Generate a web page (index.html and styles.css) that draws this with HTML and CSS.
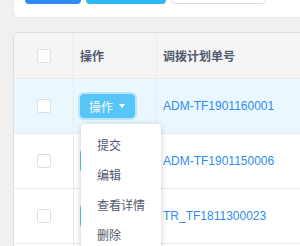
FILE: index.html
```html
<!DOCTYPE html>
<html lang="zh-CN">
<head>
    <meta charset="UTF-8">
    <meta name="viewport" content="width=device-width, initial-scale=1.0">
    <title>调拨计划</title>
    <link rel="stylesheet" href="styles.css">
</head>
<body>
    <div class="toolbar">
        <button class="btn btn-primary">新增</button>
        <button class="btn btn-info">批量提交</button>
        <button class="btn btn-default">导出</button>
    </div>

    <div class="table-wrap">
        <table class="grid">
            <colgroup>
                <col class="col-check">
                <col class="col-action">
                <col class="col-no">
            </colgroup>
            <thead>
                <tr>
                    <th class="cell-check"><span class="checkbox"></span></th>
                    <th>操作</th>
                    <th>调拨计划单号</th>
                </tr>
            </thead>
            <tbody>
                <tr class="is-hover">
                    <td class="cell-check"><span class="checkbox"></span></td>
                    <td>
                        <div class="action">
                            <button class="btn btn-info btn-small is-open">操作 <span class="caret"></span></button>
                            <ul class="dropdown">
                                <li>提交</li>
                                <li>编辑</li>
                                <li>查看详情</li>
                                <li>删除</li>
                            </ul>
                        </div>
                    </td>
                    <td><a class="link" href="#">ADM-TF1901160001</a></td>
                </tr>
                <tr>
                    <td class="cell-check"><span class="checkbox"></span></td>
                    <td><button class="btn btn-info btn-small">操作 <span class="caret"></span></button></td>
                    <td><a class="link" href="#">ADM-TF1901150006</a></td>
                </tr>
                <tr>
                    <td class="cell-check"><span class="checkbox"></span></td>
                    <td><button class="btn btn-info btn-small">操作 <span class="caret"></span></button></td>
                    <td><a class="link" href="#">TR_TF1811300023</a></td>
                </tr>
                <tr>
                    <td class="cell-check"><span class="checkbox"></span></td>
                    <td><button class="btn btn-info btn-small">操作 <span class="caret"></span></button></td>
                    <td><a class="link" href="#">TR_TF1811300019</a></td>
                </tr>
            </tbody>
        </table>
    </div>
</body>
</html>
```

FILE: styles.css
```css
html, body {
    overflow: hidden;
}

body {
    font-family: "Liberation Sans", "Noto Sans CJK SC", sans-serif;
    font-size: 12px;
    color: #515a6e;
    background-color: #f0f0f0;
    margin: 0;
    width: 420px;
}

.toolbar {
    display: flex;
    gap: 5px;
    margin: -28px 0 0 13px;
    padding: 0 11px 13px;
    background-color: #fff;
    border: 1px solid #e8eaec;
    border-top: none;
    border-radius: 0 0 0 6px;
}

.btn {
    font-family: inherit;
    font-size: 12px;
    height: 32px;
    padding: 0 15px;
    border: 1px solid transparent;
    border-radius: 4px;
    color: #fff;
    cursor: pointer;
}

.btn-primary {
    width: 56px;
    background-color: #2d8cf0;
}

.btn-info {
    width: 80px;
    background-color: #2db7f5;
}

.btn-default {
    width: 95px;
    background-color: #fff;
    border-color: #dcdee2;
    color: #515a6e;
}

.btn-small {
    display: inline-flex;
    align-items: center;
    gap: 6px;
    width: auto;
    height: 24px;
    padding: 0 9px 0 8px;
    background-color: #57c5f7;
    border-color: #57c5f7;
    vertical-align: middle;
}

.btn-small.is-open {
    box-shadow: 0 0 0 2px rgba(45, 183, 245, 0.25);
}

.caret {
    width: 0;
    height: 0;
    border-left: 3.5px solid transparent;
    border-right: 3.5px solid transparent;
    border-top: 4px solid #fff;
}

.table-wrap {
    margin: 14px 0 0 13px;
    border-top: 1px solid #dcdee2;
    border-left: 1px solid #dcdee2;
    border-radius: 4px 0 0 0;
    background-color: #fff;
}

.grid {
    border-collapse: separate;
    border-spacing: 0;
    width: 100%;
    table-layout: fixed;
}

.col-check {
    width: 60px;
}

.col-action {
    width: 83px;
}

.grid th,
.grid td {
    padding: 0 6px;
    text-align: left;
    vertical-align: middle;
    border-right: 1px solid #e8eaec;
    border-bottom: 1px solid #e8eaec;
}

.grid thead tr {
    height: 46px;
}

.grid th {
    background-color: #f5f5f5;
    font-weight: bold;
    color: #515a6e;
}

.grid tbody tr {
    height: 55px;
}

.grid tr.is-hover td {
    background-color: #ebf7ff;
}

.grid .cell-check {
    text-align: center;
    padding: 0;
}

.checkbox {
    display: inline-block;
    width: 14px;
    height: 14px;
    border: 1px solid #dcdee2;
    border-radius: 2px;
    background-color: #fff;
    vertical-align: middle;
    box-sizing: border-box;
}

.link {
    color: #2d8cf0;
    text-decoration: none;
}

.action {
    position: relative;
}

.dropdown {
    position: absolute;
    top: 30px;
    left: 1px;
    z-index: 2;
    width: 80px;
    margin: 0;
    padding: 7px 0;
    list-style: none;
    background-color: #fff;
    border-radius: 4px;
    box-shadow: 0 1px 6px rgba(0, 0, 0, 0.2);
}

.dropdown li {
    padding: 7px 16px;
    line-height: 16px;
    color: #515a6e;
    white-space: nowrap;
}
```
